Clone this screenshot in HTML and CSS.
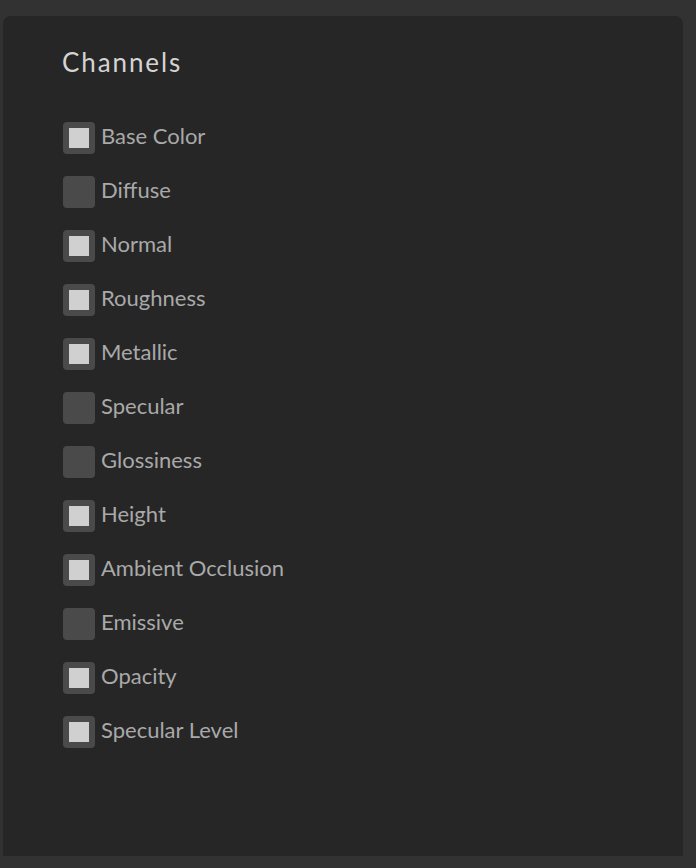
FILE: index.html
```html
<!DOCTYPE html>
<html>
<head>
<meta charset="utf-8">
<link rel="stylesheet" href="styles.css">
</head>
<body>
<div class="panel">
  <h2 class="title">Channels</h2>
  <ul class="list">
    <li class="row"><span class="box on"></span><span class="label">Base Color</span></li>
    <li class="row"><span class="box"></span><span class="label">Diffuse</span></li>
    <li class="row"><span class="box on"></span><span class="label">Normal</span></li>
    <li class="row"><span class="box on"></span><span class="label">Roughness</span></li>
    <li class="row"><span class="box on"></span><span class="label">Metallic</span></li>
    <li class="row"><span class="box"></span><span class="label">Specular</span></li>
    <li class="row"><span class="box"></span><span class="label">Glossiness</span></li>
    <li class="row"><span class="box on"></span><span class="label">Height</span></li>
    <li class="row"><span class="box on"></span><span class="label">Ambient Occlusion</span></li>
    <li class="row"><span class="box"></span><span class="label">Emissive</span></li>
    <li class="row"><span class="box on"></span><span class="label">Opacity</span></li>
    <li class="row"><span class="box on"></span><span class="label">Specular Level</span></li>
  </ul>
</div>
</body>
</html>
```
FILE: styles.css
```css
html, body {
  margin: 0;
  padding: 0;
  background: #323232;
  height: 100%;
}
body {
  padding: 16px 13px 12px 3px;
  box-sizing: border-box;
  width: 696px;
  height: 868px;
  font-family: Lato, "Open Sans", sans-serif;
}
.panel {
  background: #262626;
  border-radius: 8px 8px 0 0;
  height: 840px;
  box-sizing: border-box;
  padding: 31px 0 0 60px;
}
.title {
  margin: 0 0 0 -1px;
  font-weight: 400;
  font-size: 26px;
  line-height: 30px;
  letter-spacing: 1.9px;
  color: #d4d4d4;
}
.list {
  list-style: none;
  margin: 45px 0 0 0;
  padding: 0;
  display: flex;
  flex-direction: column;
  gap: 22px;
}
.row {
  display: flex;
  align-items: center;
  gap: 6px;
  height: 32px;
}
.box {
  width: 32px;
  height: 32px;
  border-radius: 4px;
  background: #4a4a4a;
  display: flex;
  align-items: center;
  justify-content: center;
  flex: none;
}
.box.on::after {
  content: "";
  width: 20px;
  height: 20px;
  background: #d0d0d0;
}
.label {
  font-size: 22px;
  color: #a9a9a9;
  line-height: 28px;
  margin-bottom: 4px;
}
```
